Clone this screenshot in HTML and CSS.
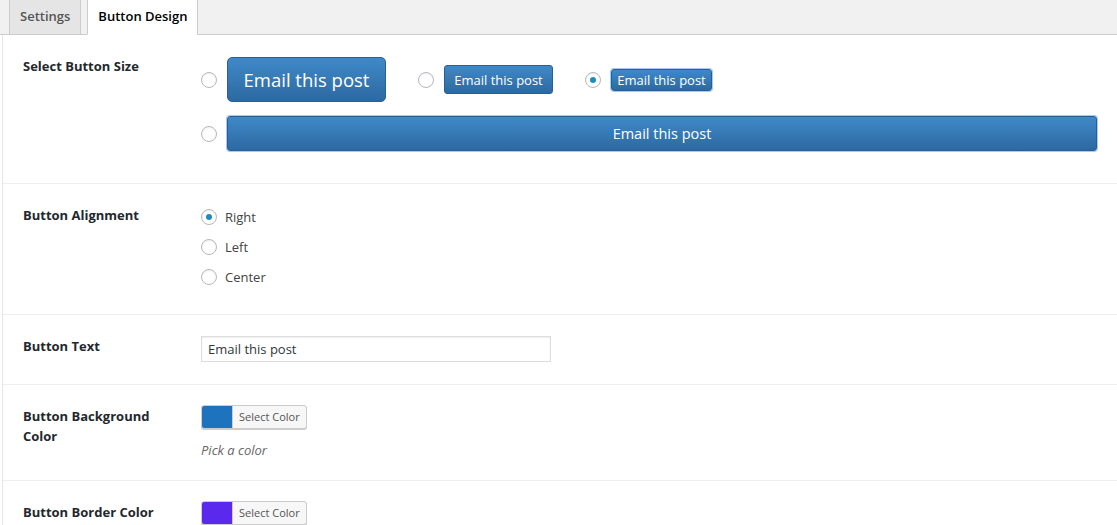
FILE: index.html
```html
<!DOCTYPE html>
<html lang="en">
<head>
<meta charset="utf-8">
<title>Button Design</title>
<link rel="stylesheet" href="styles.css">
</head>
<body>
<nav class="tabs">
  <a class="tab">Settings</a>
  <a class="tab tab-active">Button Design</a>
</nav>
<main class="panel">
  <section class="row">
    <div class="label">Select Button Size</div>
    <div class="field field-sizes">
      <div class="size-line">
        <label class="size-opt"><span class="radio"></span><span class="btn btn-lg">Email this post</span></label>
        <label class="size-opt"><span class="radio"></span><span class="btn btn-md">Email this post</span></label>
        <label class="size-opt"><span class="radio radio-on"></span><span class="btn btn-sm btn-focus">Email this post</span></label>
      </div>
      <div class="size-line size-line-full">
        <label class="size-opt size-opt-full"><span class="radio"></span><span class="btn btn-full btn-focus">Email this post</span></label>
      </div>
    </div>
  </section>

  <section class="row">
    <div class="label">Button Alignment</div>
    <div class="field field-align">
      <label class="choice"><span class="radio radio-on"></span>Right</label>
      <label class="choice"><span class="radio"></span>Left</label>
      <label class="choice"><span class="radio"></span>Center</label>
    </div>
  </section>

  <section class="row">
    <div class="label">Button Text</div>
    <div class="field field-text">
      <div class="text-input">Email this post</div>
    </div>
  </section>

  <section class="row">
    <div class="label">Button Background Color</div>
    <div class="field field-color">
      <div class="color-btn"><span class="swatch swatch-blue"></span><span class="color-text">Select Color</span></div>
      <p class="hint">Pick a color</p>
    </div>
  </section>

  <section class="row">
    <div class="label">Button Border Color</div>
    <div class="field field-color">
      <div class="color-btn"><span class="swatch swatch-purple"></span><span class="color-text">Select Color</span></div>
    </div>
  </section>
</main>
</body>
</html>
```

FILE: styles.css
```css
* { box-sizing: border-box; }

html, body {
  margin: 0;
  background: #fff;
  font-family: "Open Sans", "Noto Sans", sans-serif;
  font-size: 13px;
  color: #23282d;
  overflow: hidden;
}

/* tab strip */
.tabs {
  display: flex;
  align-items: flex-end;
  gap: 6px;
  height: 35px;
  padding-left: 9px;
  background: #f1f1f1;
  border-bottom: 1px solid #ccc;
}

.tab {
  display: block;
  height: 36px;
  margin-bottom: -1px;
  padding: 8px 10px 0;
  border: 1px solid #ccc;
  border-top: none;
  background: #e5e5e5;
  color: #555;
  font-size: 13px;
  font-weight: 600;
  line-height: 18px;
}

.tab-active {
  background: #fff;
  border-bottom-color: #fff;
  color: #000;
}

/* settings panel */
.panel {
  margin-left: 2px;
  border-left: 1px solid #e5e5e5;
}

.row {
  display: grid;
  grid-template-columns: 198px 1fr;
  border-bottom: 1px solid #eee;
}

.label {
  padding: 21px 34px 0 20px;
  font-weight: 700;
  font-size: 13px;
  line-height: 20px;
  color: #23282d;
}

.field { padding-right: 20px; }

/* radio */
.radio {
  flex: none;
  display: inline-flex;
  align-items: center;
  justify-content: center;
  width: 16px;
  height: 16px;
  border: 1px solid #b4b9be;
  border-radius: 50%;
  background: #fff;
  box-shadow: inset 0 1px 2px rgba(0, 0, 0, 0.07);
}

.radio-on::after {
  content: "";
  width: 6px;
  height: 6px;
  border-radius: 50%;
  background: #1e8cbe;
}

/* button sizes */
.field-sizes { padding-top: 22px; padding-bottom: 32px; }

.size-line {
  display: flex;
  align-items: center;
  gap: 32px;
  height: 45px;
}

.size-line-full { margin-top: 14px; height: 35px; }

.size-opt {
  display: flex;
  align-items: center;
  gap: 10px;
}

.size-opt-full { flex: 1; }

.btn {
  display: inline-flex;
  align-items: center;
  justify-content: center;
  border: 1px solid #2a5f93;
  background: linear-gradient(#3f89c8, #2d69a1);
  color: #fff;
  font-family: "Open Sans", "Noto Sans", sans-serif;
  white-space: nowrap;
}

.btn-lg {
  width: 159px;
  height: 45px;
  border-radius: 5px;
  font-size: 18.5px;
}

.btn-md {
  width: 109px;
  height: 29px;
  border-radius: 3px;
  font-size: 13px;
}

.btn-sm {
  width: 101px;
  height: 22px;
  border-radius: 3px;
  font-size: 13px;
}

.btn-full {
  flex: 1;
  height: 35px;
  border-radius: 3px;
  font-size: 14.5px;
}

.btn-focus { box-shadow: 0 0 0 1px #a8c8f5; }

/* alignment choices */
.field-align { padding: 18px 0 22px; }

.choice {
  display: flex;
  align-items: center;
  gap: 8px;
  height: 30px;
  font-size: 13px;
  color: #444;
}

/* text input */
.field-text { padding: 21px 0 22px; }

.text-input {
  width: 350px;
  height: 26px;
  padding: 0 6px;
  border: 1px solid #ddd;
  box-shadow: inset 0 1px 2px rgba(0, 0, 0, 0.07);
  font-size: 13px;
  line-height: 25px;
  color: #32373c;
}

/* color picker */
.field-color { padding: 20px 0 20px; }

.color-btn {
  display: flex;
  width: 106px;
  height: 24px;
  border: 1px solid #ccc;
  border-radius: 3px;
  background: #f7f7f7;
  box-shadow: 0 1px 0 #ccc;
  overflow: hidden;
}

.swatch { width: 30px; }
.swatch-blue { background: #1e73be; }
.swatch-purple { background: #5b28ee; }

.color-text {
  flex: 1;
  padding-left: 6px;
  border-left: 1px solid #ccc;
  font-size: 11px;
  line-height: 22px;
  color: #555;
}

.hint {
  margin: 11px 0 0;
  font-size: 13px;
  line-height: 20px;
  font-style: italic;
  color: #666;
}
```
